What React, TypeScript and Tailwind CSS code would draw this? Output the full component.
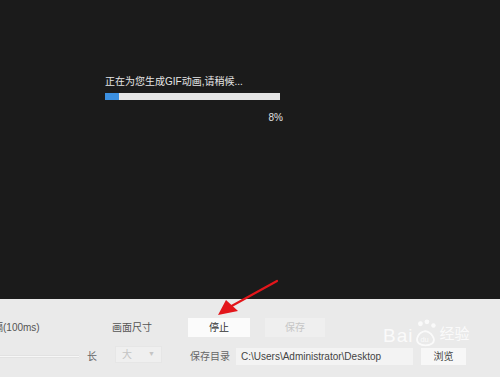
import React from "react";

const cjk = { fontFamily: '"Liberation Sans", "Noto Sans CJK SC", sans-serif' };

// Arrow pointing at the stop button
const RedArrow: React.FC = () => (
  <svg className="absolute left-0 top-0 pointer-events-none" width="500" height="377">
    <line x1="277" y1="281" x2="228" y2="308" stroke="#e3161b" strokeWidth="2.2" strokeLinecap="round" />
    <polygon points="218,315 226,300 238,311" fill="#e3161b" />
  </svg>
);

// Baidu jingyan watermark
const Watermark: React.FC = () => (
  <div className="absolute left-[383px] top-[318px] flex items-end text-white opacity-80 pointer-events-none" style={cjk}>
    <span className="text-[19px] leading-[26px] tracking-[1px]" style={{ fontFamily: '"Liberation Sans", sans-serif' }}>Bai</span>
    <svg width="26" height="30" viewBox="0 0 28 30" className="mb-[1px]">
      <circle cx="8" cy="5" r="2.6" fill="white" />
      <circle cx="15" cy="3" r="2.6" fill="white" />
      <circle cx="22" cy="7" r="2.4" fill="white" />
      <path d="M6 26 C2 22 6 14 13 13 C20 14 25 22 21 26 C17 29 10 29 6 26 Z" fill="none" stroke="white" strokeWidth="2" />
      <text x="8" y="25" fontSize="8" fill="white" fontFamily="Liberation Sans">du</text>
    </svg>
    <span className="text-[15px] leading-[22px] mb-[4px]">经验</span>
  </div>
);

export default function App() {
  return (
    <div className="relative w-[500px] h-[377px] overflow-hidden flex flex-col select-none" style={cjk}>
      {/* zone de progression */}
      <div className="h-[299px] bg-[#1b1b1b] pl-[105px] pt-[75px]">
        <p className="text-[10px] leading-[14px] text-[#e6e6e6] whitespace-nowrap">正在为您生成GIF动画,请稍候...</p>
        <div className="mt-[4px] w-[175px] h-[7px] bg-[#e4e4e4]">
          <div className="h-full w-[14px] bg-[#3b8fe0]" />
        </div>
        <div className="w-[178px] mt-[11px] text-right text-[10px] leading-[14px] text-[#e0e0e0]">8%</div>
      </div>

      {/* panneau de réglages */}
      <div className="flex-1 bg-[#eaeaea] flex items-start pt-[19px] text-[10px] text-[#555]">
        <div className="w-[97px] shrink-0 overflow-hidden">
          <div className="h-[19px] flex items-center whitespace-nowrap -ml-[7px]">隔(100ms)</div>
          <div className="mt-[10px] h-[18px] flex items-center">
            <div className="w-[80px] h-[3px] bg-[#f7f7f7] border-y border-[#e2e2e2]" />
            <span className="ml-[8px] text-[#666]">长</span>
          </div>
        </div>

        <div className="ml-[15px] w-[50px] shrink-0">
          <div className="h-[19px] flex items-center whitespace-nowrap">画面尺寸</div>
          <div className="mt-[9px] ml-[3px] w-[47px] h-[17px] bg-[#efefef] border border-[#e6e6e6] flex items-center justify-between px-[6px] text-[#c4c4c4]">
            <span>大</span>
            <span className="text-[7px]">▼</span>
          </div>
        </div>

        <div className="ml-[26px] shrink-0">
          <div className="h-[19px] flex items-center">
            <div className="w-[62px] h-[19px] bg-[#fbfbfb] flex items-center justify-center text-[#333]">停止</div>
            <div className="ml-[15px] w-[60px] h-[19px] bg-[#efefef] flex items-center justify-center text-[#c6c6c6]">保存</div>
          </div>
          <div className="mt-[10px] h-[18px] flex items-center">
            <span className="ml-[2px] w-[46px] text-[#666]">保存目录</span>
            <div className="w-[177px] h-[17px] bg-[#f3f3f3] flex items-center pl-[5px] text-[#444] whitespace-nowrap">
              C:\Users\Administrator\Desktop
            </div>
            <div className="ml-[8px] w-[45px] h-[17px] bg-[#f7f7f7] flex items-center justify-center text-[#444]">浏览</div>
          </div>
        </div>
      </div>

      <Watermark />
      <RedArrow />
    </div>
  );
}
